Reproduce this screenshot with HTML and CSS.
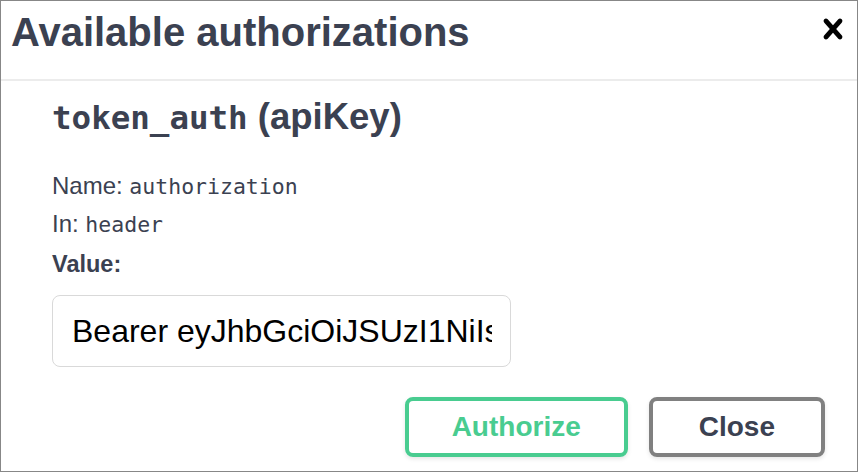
FILE: index.html
```html
<!DOCTYPE html>
<html lang="en">
<head>
    <meta charset="UTF-8">
    <meta name="viewport" content="width=device-width, initial-scale=1.0">
    <title>Available authorizations</title>
    <link rel="stylesheet" href="styles.css">
</head>
<body>
    <div class="modal">
        <div class="modal-header">
            <h3>Available authorizations</h3>
            <button class="close-modal" type="button" aria-label="Close">
                <svg width="40" height="40" viewBox="0 0 20 20">
                    <path d="M14.348 14.849c-.469.469-1.229.469-1.697 0L10 11.819l-2.651 3.029c-.469.469-1.229.469-1.697 0-.469-.469-.469-1.229 0-1.697l2.758-3.15-2.759-3.152c-.469-.469-.469-1.228 0-1.697.469-.469 1.228-.469 1.697 0L10 8.183l2.651-3.031c.469-.469 1.228-.469 1.697 0 .469.469.469 1.229 0 1.697l-2.758 3.152 2.758 3.150c.469.469.469 1.229 0 1.698z"/>
                </svg>
            </button>
        </div>

        <div class="modal-content">
            <h4><code>token_auth</code> (apiKey)</h4>
            <p class="meta">Name: <code>authorization</code></p>
            <p class="meta">In: <code>header</code></p>
            <label for="value">Value:</label>
            <input type="text" id="value" name="value" value="Bearer eyJhbGciOiJSUzI1NiIsInR5cCI6IkpXVCJ9.eyJzdWIiOiIxMjM0NTY3ODkwIn0">

            <div class="auth-btn-wrapper">
                <button class="btn authorize" type="button">Authorize</button>
                <button class="btn btn-done" type="button">Close</button>
            </div>
        </div>
    </div>
</body>
</html>
```

FILE: styles.css
```css
body {
    margin: 0;
    padding: 0;
    background-color: #fff;
    font-family: "Liberation Sans", Arial, sans-serif;
    color: #3b4151;
}

.modal {
    width: 858px;
    height: 472px;
    box-sizing: border-box;
    border: 1px solid #878787;
    background-color: #fff;
}

.modal-header {
    display: flex;
    align-items: flex-start;
    padding: 7px 4px 23px 10px;
    border-bottom: 2px solid #ececec;
}

.modal-header h3 {
    flex: 1;
    margin: 0;
    font-size: 40px;
    line-height: 48px;
    font-weight: 700;
    color: #3b4151;
}

.close-modal {
    background: none;
    border: none;
    padding: 0;
    margin-top: 1px;
    cursor: pointer;
    line-height: 0;
}

.close-modal svg {
    fill: #000;
}

.modal-content {
    padding: 0 32px 0 51px;
}

h4 {
    margin: 14px 0 28px;
    font-size: 36.5px;
    line-height: 44px;
    font-weight: 700;
    color: #3b4151;
}

h4 code {
    font-family: "DejaVu Sans Mono", monospace;
    font-size: 32.5px;
    line-height: 1;
}

.meta {
    margin: 0;
    font-size: 24px;
    line-height: 38px;
    color: #3b4151;
}

.meta code {
    font-family: "DejaVu Sans Mono", monospace;
    font-size: 21.5px;
    line-height: 1;
}

label {
    display: block;
    margin-top: 2px;
    font-size: 23.5px;
    line-height: 38px;
    font-weight: 700;
    color: #3b4151;
}

input[type="text"] {
    display: block;
    width: 459px;
    height: 72px;
    margin-top: 12px;
    padding: 0 18px 0 19px;
    box-sizing: border-box;
    border: 1px solid #d9d9d9;
    border-radius: 8px;
    font-family: "Liberation Sans", Arial, sans-serif;
    font-size: 32px;
    color: #000;
    background-color: #fff;
}

.auth-btn-wrapper {
    display: flex;
    justify-content: flex-end;
    gap: 21px;
    margin-top: 30px;
}

.btn {
    height: 60px;
    background: transparent;
    border: 4px solid #808080;
    border-radius: 8px;
    box-shadow: 0 2px 4px rgba(0, 0, 0, 0.1);
    font-family: "Liberation Sans", Arial, sans-serif;
    font-size: 28px;
    font-weight: 700;
    color: #3b4151;
    padding: 0 46px;
    cursor: pointer;
}

.btn.authorize {
    border-color: #49cc90;
    color: #49cc90;
    padding: 0 43px;
}
```
